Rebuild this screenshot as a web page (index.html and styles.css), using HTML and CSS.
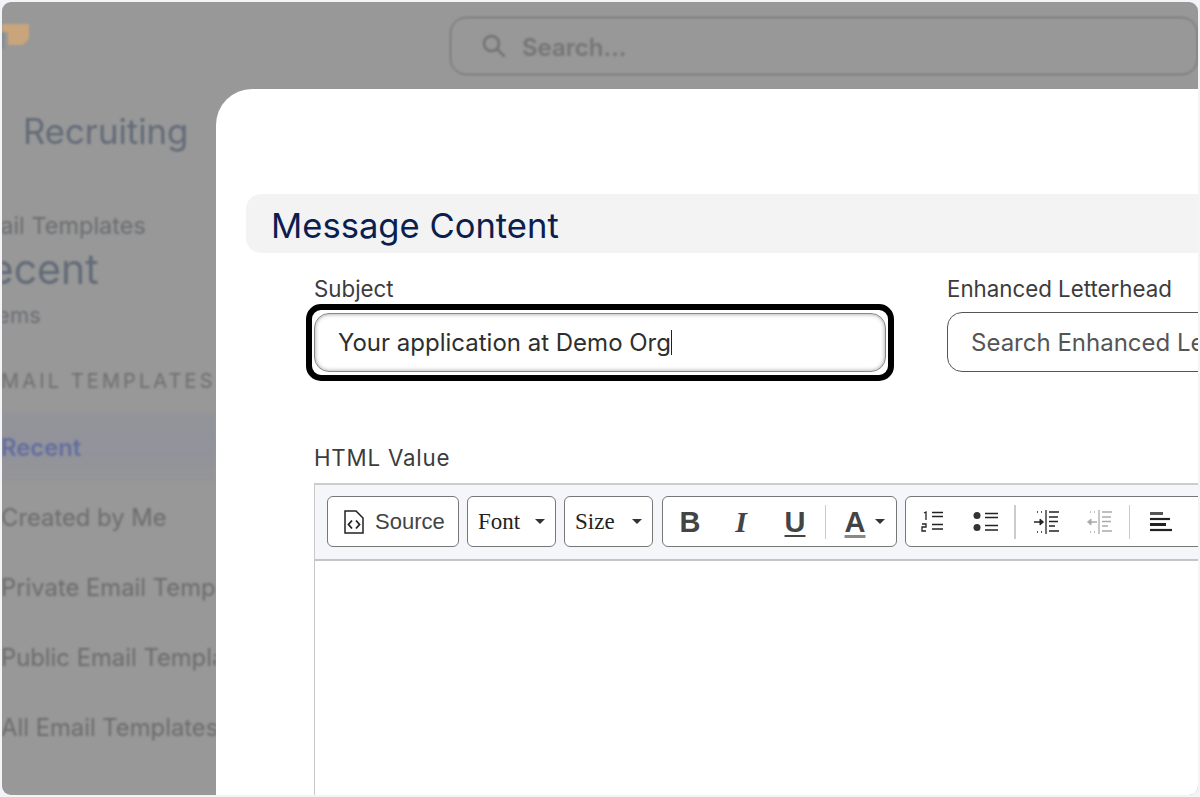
FILE: index.html
```html
<!DOCTYPE html>
<html lang="en">
<head>
<meta charset="utf-8">
<title>Message Content</title>
<link rel="stylesheet" href="styles.css">
</head>
<body>
<div class="window">
  <div class="backdrop">
    <header class="topbar">
      <div class="logo"><svg width="30" height="30" viewBox="0 0 30 30"><path d="M0 2H27V17L21 23H6V10H0Z" fill="#c9a57b"/><rect x="0" y="10" width="2" height="17" fill="#7d8a90"/></svg></div>
      <div class="search">
        <svg width="26" height="26" viewBox="0 0 26 26" fill="none" stroke="#707070" stroke-width="2.400"><circle cx="10.500" cy="10.500" r="7.500"/><path d="M16 16L23 23" stroke-linecap="round"/></svg>
        <span>Search...</span>
      </div>
    </header>
    <aside class="side">
      <h2 class="app">Recruiting</h2>
      <div class="crumb">Email Templates</div>
      <div class="big">Recent</div>
      <div class="count">3 items</div>
      <div class="sect">EMAIL TEMPLATES</div>
      <nav class="nav">
        <div class="nav-item active">Recent</div>
        <div class="nav-item">Created by Me</div>
        <div class="nav-item">Private Email Templates</div>
        <div class="nav-item">Public Email Templates</div>
        <div class="nav-item">All Email Templates</div>
      </nav>
    </aside>
  </div>
  <main class="modal">
    <h1 class="band">Message Content</h1>
    <div class="fields">
      <div class="field subject">
        <label class="lab">Subject</label>
        <div class="input focus"><span>Your application at Demo Org</span><i class="caret"></i></div>
      </div>
      <div class="field letter">
        <label class="lab">Enhanced Letterhead</label>
        <div class="input plain">Search Enhanced Letterhead...</div>
      </div>
    </div>
    <div class="html-lab lab">HTML Value</div>
    <div class="editor">
      <div class="toolbar">
        <div class="tb source">
          <svg width="22" height="26" viewBox="0 0 22 26" fill="none" stroke="#222" stroke-width="1.500"><path d="M2 2H13L20 9V24H2Z"/><path d="M9 11.500L5.500 15.500L9 19.500M13 11.500L16.500 15.500L13 19.500" stroke-width="1.800"/></svg>
          <span>Source</span>
        </div>
        <div class="tb combo font"><span>Font</span><i class="arrow"></i></div>
        <div class="tb combo size"><span>Size</span><i class="arrow"></i></div>
        <div class="tb group g1">
          <span class="gl b">B</span>
          <span class="gl i">I</span>
          <span class="gl u">U</span>
          <i class="sep"></i>
          <span class="gl a">A</span><i class="arrow a-arrow"></i>
        </div>
        <div class="tb group g2">
          <svg class="ic" width="24" height="24" viewBox="0 0 24 24" stroke="#222" fill="none"><path d="M11 2.500H22M11 6.500H22M11 14.500H22M11 19H22" stroke-width="1.600"/><path d="M3 3L5 2V10M1 14H5V17H1V21H5" stroke-width="1.300"/></svg>
          <svg class="ic bl" width="26" height="24" viewBox="0 0 26 24" stroke="#222" fill="none"><circle cx="4" cy="5.500" r="3.500" fill="#333" stroke="none"/><circle cx="4" cy="17.500" r="3.500" fill="#333" stroke="none"/><path d="M12 3.500H25M12 7.500H25M12 15.500H25M12 20H25" stroke-width="1.700"/></svg>
          <i class="sep s2"></i>
          <svg class="ic in" width="26" height="26" viewBox="0 0 26 26" stroke="#222" fill="none"><path d="M13 1V25" stroke-width="1.300"/><path d="M16 3H26M16 8H25M16 12.500H25M16 17H22M16 22H26" stroke-width="1.500"/><path d="M1 13H10" stroke-width="1.500"/><path d="M7 10L10.500 13L7 16Z" fill="#222"/><path d="M4 3H5M8 3H9M4 23H5M8 23H9" stroke-width="1.500"/></svg>
          <svg class="ic out" width="26" height="26" viewBox="0 0 26 26" stroke="#aaa" fill="none"><path d="M13 1V25" stroke-width="1.300"/><path d="M16 3H26M16 8H25M16 12.500H25M16 17H22M16 22H26" stroke-width="1.500"/><path d="M3 13H11" stroke-width="1.500"/><path d="M5 10L1.500 13L5 16Z" fill="#aaa"/><path d="M4 3H5M8 3H9M4 23H5M8 23H9" stroke-width="1.500"/></svg>
          <i class="sep s3"></i>
          <svg class="ic al" width="24" height="22" viewBox="0 0 24 22" stroke="#222" fill="none"><path d="M1 2.500H14" stroke-width="3" stroke="#555"/><path d="M1 8H21" stroke-width="2.200"/><path d="M1 13.500H17" stroke-width="3"/><path d="M1 19H23" stroke-width="2.200"/></svg>
        </div>
      </div>
    </div>
  </main>
</div>
</body>
</html>
```
FILE: styles.css
```css
* { box-sizing: border-box; }
html, body { margin: 0; height: 100%; }
body {
  background: #f3f3f8;
  padding: 2px;
  overflow: hidden;
  font-family: Inter, "Liberation Sans", sans-serif;
}
.window {
  width: 1196px;
  height: 793px;
  border-radius: 9px;
  overflow: hidden;
  background: #989898;
  position: relative;
}
.backdrop {
  filter: blur(1px);
  height: 100%;
  overflow: hidden;
}
.topbar {
  height: 87px;
  display: flex;
  padding-top: 15px;
}
.logo { width: 448px; padding-top: 5px; }
.logo svg { display: block; }
.search {
  width: 748px;
  height: 58px;
  border: 1.500px solid #6a6a6a;
  border-radius: 16px;
  display: flex;
  align-items: center;
  gap: 15px;
  padding-left: 30px;
  font-size: 24px;
  font-weight: 600;
  color: #757575;
}
.search span { padding-top: 2px; }
.side { width: 214px; overflow: hidden; }
.app {
  margin: 20px 0 0 21px;
  font-size: 34.700px;
  line-height: 44px;
  font-weight: 400;
  color: #626b78;
}
.crumb {
  margin: 58px 0 0 -36.500px;
  font-size: 23.500px;
  line-height: 30px;
  color: #6b6d70;
  white-space: nowrap;
}
.big {
  margin: 3px 0 0 -38px;
  font-size: 41px;
  line-height: 50px;
  color: #626b78;
}
.count {
  margin: 6px 0 0 -37px;
  font-size: 22px;
  line-height: 30px;
  color: #6b6e74;
}
.sect {
  margin: 36px 0 0 -16px;
  font-size: 20px;
  line-height: 30px;
  letter-spacing: 3.100px;
  color: #6f6f6f;
  white-space: nowrap;
}
.nav { margin-top: 16px; margin-left: -1px; }
.nav-item {
  height: 70px;
  display: flex;
  align-items: center;
  font-size: 23.800px;
  color: #6c6c6c;
  white-space: nowrap;
}
.nav-item.active {
  color: #646e9f;
  font-weight: 600;
  background: linear-gradient(#94959a, #92939b 50%, #959598);
}
.modal {
  position: absolute;
  left: 214px;
  top: 87px;
  width: 982px;
  height: 706px;
  background: #fff;
  border-top-left-radius: 36px;
  overflow: hidden;
  padding: 105px 0 0 30px;
}
.band {
  margin: 0;
  height: 59px;
  width: 1000px;
  background: #f3f3f3;
  border-radius: 15px 0 0 15px;
  padding-left: 25px;
  font-size: 34.600px;
  line-height: 62px;
  font-weight: 400;
  color: #0b1f4f;
}
.fields {
  display: flex;
  margin: 21px 0 0 68px;
  gap: 61px;
  width: 1200px;
}
.lab {
  display: block;
  font-size: 22.300px;
  line-height: 30px;
  color: #3c3c3c;
}
.field.subject { width: 572px; }
.field.letter { width: 500px; }
.input {
  margin-top: 9px;
  height: 59px;
  border: 1.500px solid #555;
  border-radius: 15px;
  display: flex;
  align-items: center;
  padding-left: 23px;
  font-size: 24px;
  color: #2e2e2e;
  white-space: nowrap;
  position: relative;
}
.input.focus {
  box-shadow: inset 0 0 4px #999;
  border-color: #888;
}
.input.focus::after {
  content: "";
  position: absolute;
  inset: -10px -9px -10px -9px;
  border: 6px solid #000;
  border-radius: 15px;
}
.input.plain {
  color: #555;
  margin-top: 8px;
  height: 60px;
}
.caret { width: 1px; height: 25px; background: #222; margin-left: 0; }
.html-lab { margin: 71px 0 0 68px; letter-spacing: 0.800px; }
.editor {
  margin: 10px 0 0 68px;
  width: 1000px;
  height: 400px;
  border-left: 1.500px solid #c8c8c8;
  border-top: 2px solid #ccc;
}
.toolbar {
  height: 76px;
  background: #f5f6fa;
  border-bottom: 2px solid #c4c4c4;
  display: flex;
  gap: 8px;
  padding: 11px 0 0 12px;
}
.tb {
  height: 51px;
  background: #fff;
  border: 1.500px solid #777;
  border-radius: 6px;
  display: flex;
  align-items: center;
  flex: none;
}
.source {
  width: 132px;
  padding-left: 15px;
  gap: 10px;
  font-family: "Liberation Sans", sans-serif;
  font-size: 22px;
  color: #444;
}
.combo {
  width: 89px;
  padding-left: 10px;
  justify-content: space-between;
  padding-right: 10px;
  font-family: "Liberation Serif", serif;
  font-size: 23px;
  color: #222;
}
.arrow {
  width: 0;
  height: 0;
  border-left: 5px solid transparent;
  border-right: 5px solid transparent;
  border-top: 5px solid #333;
}
.group { position: relative; }
.g1 { width: 235px; margin-left: 1px; }
.g2 { width: 500px; }
.gl {
  width: 20px;
  display: flex;
  justify-content: center;
  flex: none;
  font-family: "Liberation Sans", sans-serif;
  font-weight: 700;
  font-size: 29px;
  line-height: 32px;
  color: #444;
}
.b { margin-left: 17px; }
.i { margin-left: 31px; font-style: italic; font-family: "Liberation Serif", serif; font-size: 30px; }
.u { margin-left: 34px; text-decoration: underline; text-decoration-thickness: 2px; text-underline-offset: 3px; }
.sep { width: 1.500px; height: 34px; background: #ccc; display: block; flex: none; }
.g1 .sep { margin-left: 19.500px; }
.a {
  margin-left: 19px;
  text-decoration: underline;
  text-decoration-color: #888;
  text-decoration-thickness: 3px;
  text-underline-offset: 3px;
}
.a-arrow { margin-left: 10px; }
.ic { flex: none; display: block; }
.g2 .ic:first-child { margin-left: 15px; }
.bl { margin-left: 28px; }
.s2 { margin-left: 15px; }
.in { margin-left: 17px; }
.out { margin-left: 27px; }
.s3 { margin-left: 17px; }
.al { margin-left: 19px; }
```
